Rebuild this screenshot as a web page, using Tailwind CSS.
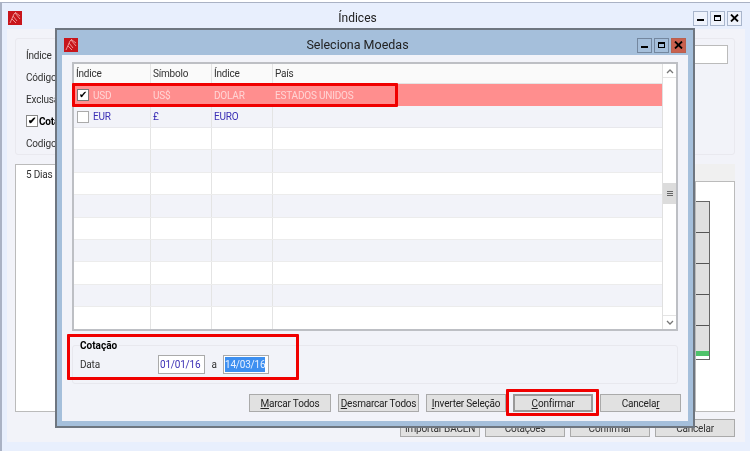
<!DOCTYPE html>
<html lang="en">
<head>
<meta charset="UTF-8">
<title>Índices</title>
<script src="https://cdn.jsdelivr.net/npm/@tailwindcss/browser@4"></script>
</head>
<body class="m-0 overflow-hidden bg-white">
<div class="relative w-[750px] h-[451px] overflow-hidden font-['Roboto','Liberation_Sans',sans-serif] text-[10px] tracking-[-0.2px] whitespace-nowrap text-[#333] blur-[0.35px]">

  <!-- janela de fundo -->
  <div class="absolute left-0 top-[2px] w-[750px] h-[449px] border-l-2 border-t border-[#aab2c4] bg-[#e8effd] flex flex-col">
    <div class="h-[26px] flex items-center pt-[4px] pl-[6px] pr-[8px] shrink-0">
      <svg width="14" height="14" viewBox="0 0 14 14"><rect width="14" height="14" fill="#c8151b"/><path d="M2 12 L6 3 L8 1 M5 5 L9 10 M7 2 L12 8 M8 2 L12 5 M4 8 L8 12" stroke="#f2a0a0" stroke-width="0.9" fill="none"/></svg>
      <div class="flex-1 text-center text-[12px] tracking-normal text-[#222]">Índices</div>
      <div class="flex gap-[2px]">
        <div class="w-[15px] h-[15px] border border-[#a9b6cc] bg-[#eef2fb] flex items-center justify-center"><div class="w-[7px] h-[2px] mt-[4px] bg-black"></div></div>
        <div class="w-[15px] h-[15px] border border-[#a9b6cc] bg-[#eef2fb] flex items-center justify-center"><div class="w-[7px] h-[6px] border border-t-2 border-black"></div></div>
        <div class="w-[15px] h-[15px] border border-[#a9b6cc] bg-[#eef2fb] flex items-center justify-center"><svg width="9" height="8" viewBox="0 0 9 8"><path d="M1 0.5 L8 7.5 M8 0.5 L1 7.5" stroke="#000" stroke-width="1.8"/></svg></div>
      </div>
    </div>
    <div class="mx-[5px] h-[413px] bg-[#f2f3f9] pt-[9px] pl-[8px] flex flex-col">
      <div class="h-[117px] w-[720px] border border-[#e9e9ef] rounded-[3px] pl-[10px] flex flex-col relative">
        <div class="h-[22px] mt-[6px] flex items-center">Índice</div>
        <div class="h-[22px] flex items-center">Código</div>
        <div class="h-[22px] flex items-center">Exclusão</div>
        <div class="h-[22px] flex items-center gap-[1px] font-bold text-black">
          <span class="w-[12px] h-[12px] border border-[#888] bg-white text-[10px] leading-[10px] text-center">✔</span>Cotação
        </div>
        <div class="h-[22px] flex items-center">Codigo</div>
        <div class="absolute right-[6px] top-[6px] w-[60px] h-[19px] border border-[#bbb] bg-white"></div>
      </div>
      <div class="mt-[9px] h-[248px] w-[720px] flex">
        <div class="flex-1 border border-[#bbb] bg-white pl-[10px] pt-[2px]">5 Dias</div>
        <div class="w-[40px] flex flex-col">
          <div class="h-[17px] bg-[#f0f0f0] shrink-0"></div>
          <div class="flex-1 border border-[#bbb] bg-white pt-[19px]">
            <div class="w-[14px] border border-l-0 border-[#666] flex flex-col">
              <div class="h-[31px] bg-[#e0e0e0] border-b border-[#555]"></div>
              <div class="h-[31px] bg-[#e0e0e0] border-b border-[#555]"></div>
              <div class="h-[31px] bg-[#e0e0e0] border-b border-[#555]"></div>
              <div class="h-[31px] bg-[#e0e0e0] border-b border-[#555]"></div>
              <div class="h-[25px] bg-[#e0e0e0]"></div>
              <div class="h-[5px] bg-[#4fc26a]"></div>
              <div class="h-[3px] bg-white"></div>
            </div>
          </div>
        </div>
      </div>
      <div class="mt-[7px] flex justify-end gap-[5px] w-[720px]">
        <div class="w-[80px] h-[18px] border border-[#aaa] bg-[#e1e1e1] flex items-center justify-center">Importar BACEN</div>
        <div class="w-[80px] h-[18px] border border-[#aaa] bg-[#e1e1e1] flex items-center justify-center">Cotações</div>
        <div class="w-[80px] h-[18px] border border-[#aaa] bg-[#e1e1e1] flex items-center justify-center">Confirmar</div>
        <div class="w-[80px] h-[18px] border border-[#aaa] bg-[#e1e1e1] flex items-center justify-center">Cancelar</div>
      </div>
    </div>
  </div>

  <!-- janela Seleciona Moedas -->
  <div class="absolute left-[55px] top-[28px] w-[640px] h-[400px] border-2 border-[#6e7680] bg-[#a5bfdb] flex flex-col">
    <div class="h-[25px] flex items-center pt-[5px] pl-[7px] pr-[7px] shrink-0">
      <svg width="14" height="14" viewBox="0 0 14 14"><rect width="14" height="14" fill="#c8151b"/><path d="M2 12 L6 3 L8 1 M5 5 L9 10 M7 2 L12 8 M8 2 L12 5 M4 8 L8 12" stroke="#f2a0a0" stroke-width="0.9" fill="none"/></svg>
      <div class="flex-1 text-center text-[12.5px] tracking-normal text-[#222]">Seleciona Moedas</div>
      <div class="flex gap-[2px]">
        <div class="w-[15px] h-[15px] border border-[#74879f] bg-[#a5bfdb] flex items-center justify-center"><div class="w-[7px] h-[2px] mt-[4px] bg-black"></div></div>
        <div class="w-[15px] h-[15px] border border-[#74879f] bg-[#a5bfdb] flex items-center justify-center"><div class="w-[7px] h-[6px] border border-t-2 border-black"></div></div>
        <div class="w-[15px] h-[15px] border border-[#b8604e] bg-[#c9604e] flex items-center justify-center"><svg width="9" height="8" viewBox="0 0 9 8"><path d="M1 0.5 L8 7.5 M8 0.5 L1 7.5" stroke="#000" stroke-width="1.8"/></svg></div>
      </div>
    </div>
    <div class="mx-[5px] mb-[5px] flex-1 bg-[#f2f3f9] px-[10px] pt-[7px] flex flex-col">
      <!-- grid -->
      <div class="h-[269px] w-[606px] border-2 border-[#bdbfc4] bg-white flex shrink-0">
        <div class="flex-1 flex flex-col overflow-hidden">
          <div class="h-[20px] bg-[#fafafa] flex items-center border-b border-[#e4e4e4] shrink-0 text-[#333]">
            <div class="w-[77px] pl-[2px] border-r border-[#e4e4e4] h-full flex items-center">Índice</div>
            <div class="w-[61px] pl-[2px] border-r border-[#e4e4e4] h-full flex items-center">Símbolo</div>
            <div class="w-[61px] pl-[2px] border-r border-[#e4e4e4] h-full flex items-center">Índice</div>
            <div class="pl-[2px]">País</div>
          </div>
          <div class="h-[22px] bg-[#ff8e8e] flex items-center text-[#ffd5d5] shrink-0">
            <div class="w-[77px] pl-[3px] flex items-center gap-[4px]"><span class="w-[12px] h-[12px] border border-[#777] bg-white text-black text-[10px] leading-[10px] text-center">✔</span>USD</div>
            <div class="w-[61px] pl-[2px]">US$</div>
            <div class="w-[61px] pl-[2px]">DOLAR</div>
            <div class="pl-[2px]">ESTADOS UNIDOS</div>
          </div>
          <div class="h-[22px] bg-[#f2f3f9] flex items-stretch text-[#3b2fb5] border-b border-[#e8e8ec] shrink-0">
            <div class="w-[77px] pl-[3px] border-r border-[#e4e4e4] flex items-center gap-[4px]"><span class="w-[12px] h-[12px] border border-[#aaa] bg-white"></span>EUR</div>
            <div class="w-[61px] pl-[2px] border-r border-[#e4e4e4] flex items-center">£</div>
            <div class="w-[61px] pl-[2px] border-r border-[#e4e4e4] flex items-center">EURO</div>
            <div></div>
          </div>
          <div class="flex-1 flex flex-col">
            <div class="h-[22.4px] bg-white border-b border-[#ececec] flex"><div class="w-[77px] border-r border-[#e4e4e4]"></div><div class="w-[61px] border-r border-[#e4e4e4]"></div><div class="w-[61px] border-r border-[#e4e4e4]"></div></div>
            <div class="h-[22.4px] bg-[#f2f3f9] border-b border-[#ececec] flex"><div class="w-[77px] border-r border-[#e4e4e4]"></div><div class="w-[61px] border-r border-[#e4e4e4]"></div><div class="w-[61px] border-r border-[#e4e4e4]"></div></div>
            <div class="h-[22.4px] bg-white border-b border-[#ececec] flex"><div class="w-[77px] border-r border-[#e4e4e4]"></div><div class="w-[61px] border-r border-[#e4e4e4]"></div><div class="w-[61px] border-r border-[#e4e4e4]"></div></div>
            <div class="h-[22.4px] bg-[#f2f3f9] border-b border-[#ececec] flex"><div class="w-[77px] border-r border-[#e4e4e4]"></div><div class="w-[61px] border-r border-[#e4e4e4]"></div><div class="w-[61px] border-r border-[#e4e4e4]"></div></div>
            <div class="h-[22.4px] bg-white border-b border-[#ececec] flex"><div class="w-[77px] border-r border-[#e4e4e4]"></div><div class="w-[61px] border-r border-[#e4e4e4]"></div><div class="w-[61px] border-r border-[#e4e4e4]"></div></div>
            <div class="h-[22.4px] bg-[#f2f3f9] border-b border-[#ececec] flex"><div class="w-[77px] border-r border-[#e4e4e4]"></div><div class="w-[61px] border-r border-[#e4e4e4]"></div><div class="w-[61px] border-r border-[#e4e4e4]"></div></div>
            <div class="h-[22.4px] bg-white border-b border-[#ececec] flex"><div class="w-[77px] border-r border-[#e4e4e4]"></div><div class="w-[61px] border-r border-[#e4e4e4]"></div><div class="w-[61px] border-r border-[#e4e4e4]"></div></div>
            <div class="h-[22.4px] bg-[#f2f3f9] border-b border-[#ececec] flex"><div class="w-[77px] border-r border-[#e4e4e4]"></div><div class="w-[61px] border-r border-[#e4e4e4]"></div><div class="w-[61px] border-r border-[#e4e4e4]"></div></div>
            <div class="flex-1 bg-white flex"><div class="w-[77px] border-r border-[#e4e4e4]"></div><div class="w-[61px] border-r border-[#e4e4e4]"></div><div class="w-[61px] border-r border-[#e4e4e4]"></div></div>
          </div>
        </div>
        <!-- scrollbar -->
        <div class="w-[14px] shrink-0 border-l border-[#e0e0e0] flex flex-col bg-white">
          <div class="h-[14px] border-b border-[#e4e4e4] flex items-center justify-center">
            <svg width="8" height="6" viewBox="0 0 8 6"><path d="M1 5 L4 2 L7 5" stroke="#777" stroke-width="1.3" fill="none"/></svg>
          </div>
          <div class="h-[105px]"></div>
          <div class="h-[21px] bg-[#dcdcdc] flex flex-col items-center justify-center gap-[1px]">
            <div class="w-[6px] h-px bg-[#666]"></div><div class="w-[6px] h-px bg-[#666]"></div><div class="w-[6px] h-px bg-[#666]"></div>
          </div>
          <div class="flex-1"></div>
          <div class="h-[14px] border-t border-[#e4e4e4] flex items-center justify-center">
            <svg width="8" height="6" viewBox="0 0 8 6"><path d="M1 1 L4 4 L7 1" stroke="#777" stroke-width="1.3" fill="none"/></svg>
          </div>
        </div>
      </div>
      <!-- cotacao -->
      <div class="relative mt-[14px] h-[39px] w-[606px] border border-[#e8e8ee] rounded-[3px] pl-[7px] flex items-center shrink-0">
        <span class="absolute left-[7px] top-[-7px] bg-[#f2f3f9] pr-[2px] font-bold tracking-normal text-black leading-[14px]">Cotação</span>
        <span class="w-[78px]">Data</span>
        <div class="w-[47px] h-[19px] border border-[#aaa] bg-white text-[#3b2fb5] flex items-center pl-[1px]">01/01/16</div>
        <span class="w-[18px] text-center">a</span>
        <div class="w-[46px] h-[19px] border border-[#aaa] bg-white flex items-center pl-[1px]"><span class="bg-[#3d8ff0] text-[#e8f1ff]">14/03/16</span></div>
      </div>
      <!-- botoes -->
      <div class="mt-[10px] flex justify-end gap-[7px] w-[609px] text-[#222]">
        <div class="w-[82px] h-[18px] border border-[#aaa] bg-[#e1e1e1] flex items-center justify-center"><span><u>M</u>arcar Todos</span></div>
        <div class="w-[81px] h-[18px] border border-[#aaa] bg-[#e1e1e1] flex items-center justify-center"><span><u>D</u>esmarcar Todos</span></div>
        <div class="w-[80px] h-[18px] border border-[#aaa] bg-[#e1e1e1] flex items-center justify-center"><span><u>I</u>nverter Seleção</span></div>
        <div class="w-[80px] h-[18px] border-2 border-[#999] bg-[#e1e1e1] flex items-center justify-center"><span><u>C</u>onfirmar</span></div>
        <div class="w-[81px] h-[18px] border border-[#aaa] bg-[#e1e1e1] flex items-center justify-center"><span>Cancela<u>r</u></span></div>
      </div>
    </div>
  </div>

  <!-- marcacoes vermelhas -->
  <div class="absolute left-[72px] top-[83px] w-[326px] h-[24px] border-[3px] border-[#f00000] rounded-[1px]"></div>
  <div class="absolute left-[67px] top-[334px] w-[232px] h-[46px] border-[3px] border-[#f00000] rounded-[1px]"></div>
  <div class="absolute left-[506px] top-[389px] w-[93px] h-[27px] border-[3px] border-[#f00000] rounded-[1px]"></div>
</div>
</body>
</html>
